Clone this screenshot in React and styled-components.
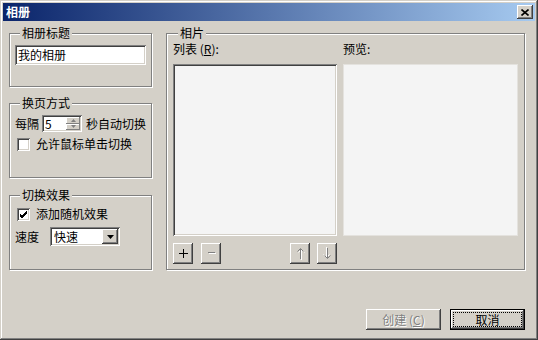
import React from "react";
import styled, { createGlobalStyle } from "styled-components";

const GlobalStyle = createGlobalStyle`
  html, body { margin:0; padding:0; background:#d4d0c8; }
  body {
    font-family: "Noto Sans CJK SC", "Liberation Sans", sans-serif;
    font-size:12px;
    color:#000;
  }
`;

const raised = `box-shadow: inset -1px -1px #404040, inset 1px 1px #ffffff, inset -2px -2px #808080, inset 2px 2px #d4d0c8;`;
const sunken = `box-shadow: inset 1px 1px #808080, inset -1px -1px #ffffff, inset 2px 2px #404040, inset -2px -2px #d4d0c8;`;

const Window = styled.div`
  width:538px;
  height:340px;
  box-sizing:border-box;
  padding:3px;
  background:#d4d0c8;
  display:flex;
  flex-direction:column;
  box-shadow: inset -1px -1px #404040, inset 1px 1px #d4d0c8, inset -2px -2px #808080, inset 2px 2px #ffffff;
`;

const TitleBar = styled.div`
  height:18px;
  display:flex;
  align-items:center;
  justify-content:space-between;
  padding:0 2px 0 3px;
  background:linear-gradient(to right, #0a246a, #a6caf0);
`;

const TitleText = styled.span`
  color:#fff;
  font-weight:bold;
  font-size:12px;
  line-height:14px;
`;

const CloseButton = styled.div`
  width:16px;
  height:14px;
  display:flex;
  align-items:center;
  justify-content:center;
  background:#d4d0c8;
  ${raised}
`;

const Body = styled.div`
  flex:1;
  display:flex;
  flex-direction:column;
  padding:5px 10px 7px 6px;
`;

const MainRow = styled.div`
  display:flex;
  gap:14px;
`;

const LeftColumn = styled.div`
  width:143px;
  display:flex;
  flex-direction:column;
`;

const Group = styled.fieldset`
  margin:${p => p.$mt || 0}px 0 0 0;
  padding:${p => p.$pad || "5px 5px"};
  border:1px solid #808080;
  box-shadow: inset 1px 1px #ffffff, 1px 1px #ffffff;
  height:${p => p.$h}px;
  width:${p => p.$w}px;
  box-sizing:border-box;
  min-width:0;
`;

const Legend = styled.legend`
  padding:0 2px;
  margin-left:5px;
  line-height:14px;
  font-size:12px;
  background:#d4d0c8;
`;

const TextField = styled.div`
  height:20px;
  box-sizing:border-box;
  padding:2px 3px;
  line-height:16px;
  background:#fff;
  ${sunken}
`;

const Row = styled.div`
  display:flex;
  align-items:center;
  margin-top:${p => p.$mt || 0}px;
  padding-left:${p => p.$pl || 0}px;
  line-height:14px;
`;

const Spin = styled.div`
  width:40px;
  height:17px;
  box-sizing:border-box;
  padding:2px;
  margin:0 4px 0 3px;
  display:flex;
  background:#fff;
  ${sunken}
`;

const SpinValue = styled.span`
  flex:1;
  padding-left:1px;
  line-height:13px;
`;

const SpinButtons = styled.div`
  width:14px;
  display:flex;
  flex-direction:column;
`;

const SpinHalf = styled.div`
  flex:1;
  display:flex;
  align-items:center;
  justify-content:center;
  background:#d4d0c8;
  box-shadow: inset -1px -1px #808080, inset 1px 1px #ffffff;
`;

const Check = styled.div`
  width:13px;
  height:13px;
  box-sizing:border-box;
  display:flex;
  align-items:center;
  justify-content:center;
  background:#fff;
  ${sunken}
`;

const CheckLabel = styled.span`
  margin-left:6px;
`;

const Select = styled.div`
  width:70px;
  height:19px;
  box-sizing:border-box;
  padding:2px;
  margin-left:11px;
  display:flex;
  background:#fff;
  ${sunken}
`;

const SelectValue = styled.span`
  flex:1;
  padding-left:2px;
  line-height:15px;
`;

const DropButton = styled.div`
  width:16px;
  display:flex;
  align-items:center;
  justify-content:center;
  background:#d4d0c8;
  ${raised}
`;

const PhotoColumns = styled.div`
  display:flex;
  gap:6px;
`;

const Column = styled.div`
  width:${p => p.$w}px;
  display:flex;
  flex-direction:column;
`;

const Caption = styled.div`
  line-height:14px;
  margin-top:2px;
`;

const ListBox = styled.div`
  margin-top:8px;
  height:172px;
  background:#f4f4f4;
  ${sunken}
`;

const PreviewBox = styled.div`
  margin-top:8px;
  height:172px;
  box-sizing:border-box;
  background:#f4f4f4;
  border:1px solid #e4e2de;
`;

const ToolRow = styled.div`
  margin-top:7px;
  display:flex;
  justify-content:space-between;
`;

const ToolGroup = styled.div`
  display:flex;
  gap:${p => p.$gap}px;
`;

const ToolButton = styled.div`
  width:20px;
  height:21px;
  display:flex;
  align-items:center;
  justify-content:center;
  background:#d4d0c8;
  ${raised}
`;

const Footer = styled.div`
  margin-top:auto;
  display:flex;
  justify-content:flex-end;
  gap:9px;
`;

const Button = styled.div`
  position:relative;
  width:75px;
  height:21px;
  display:flex;
  align-items:center;
  justify-content:center;
  line-height:14px;
  background:#d4d0c8;
  color:${p => (p.$disabled ? "#808080" : "#000")};
  text-shadow:${p => (p.$disabled ? "1px 1px #ffffff" : "none")};
  ${p =>
    p.$default
      ? "box-shadow: inset 0 0 0 1px #000, inset -2px -2px #404040, inset 2px 2px #ffffff, inset -3px -3px #808080, inset 3px 3px #d4d0c8;"
      : raised}

  &::after {
    content:"";
    display:${p => (p.$default ? "block" : "none")};
    position:absolute;
    inset:4px;
    outline:1px dotted #000;
  }
`;

const Tri = ({ down, color = "#000", w = 7 }) => (
  <svg width={w} height={Math.ceil(w / 2)} viewBox={`0 0 ${w} ${Math.ceil(w / 2)}`}>
    <path
      d={down ? `M0 0H${w}L${w / 2} ${Math.ceil(w / 2)}Z` : `M0 ${Math.ceil(w / 2)}H${w}L${w / 2} 0Z`}
      fill={color}
    />
  </svg>
);

const Arrow = ({ down }) => (
  <svg width="9" height="13" viewBox="0 0 9 13">
    <g transform={down ? "rotate(180 4.5 6.5)" : undefined}>
      <path d="M5.5 3v10M2.5 5.5L5.5 2.5L8.5 5.5" stroke="#fff" fill="none" />
      <path d="M4.5 2v10M1.5 4.5L4.5 1.5L7.5 4.5" stroke="#808080" fill="none" />
    </g>
  </svg>
);

export default function App() {
  return (
    <>
      <GlobalStyle />
      <Window>
        <TitleBar>
          <TitleText>相册</TitleText>
          <CloseButton>
            <svg width="8" height="7" viewBox="0 0 8 7">
              <path d="M0.5 0.5L7.5 6.5M7.5 0.5L0.5 6.5" stroke="#000" strokeWidth="1.6" />
            </svg>
          </CloseButton>
        </TitleBar>
        <Body>
          <MainRow>
            <LeftColumn>
              <Group $h={61}>
                <Legend>相册标题</Legend>
                <TextField>我的相册</TextField>
              </Group>
              <Group $h={82} $mt={9}>
                <Legend>换页方式</Legend>
                <Row>
                  每隔
                  <Spin>
                    <SpinValue>5</SpinValue>
                    <SpinButtons>
                      <SpinHalf><Tri w={5} color="#808080" /></SpinHalf>
                      <SpinHalf><Tri w={5} down color="#808080" /></SpinHalf>
                    </SpinButtons>
                  </Spin>
                  秒自动切换
                </Row>
                <Row $mt={5} $pl={2}>
                  <Check />
                  <CheckLabel>允许鼠标单击切换</CheckLabel>
                </Row>
              </Group>
              <Group $h={82} $mt={10}>
                <Legend>切换效果</Legend>
                <Row $pl={2}>
                  <Check>
                    <svg width="9" height="9" viewBox="0 0 9 9">
                      <path d="M1 4l2 2 5-5M1 5l2 2 5-5M1 6l2 2 5-5" stroke="#000" fill="none" />
                    </svg>
                  </Check>
                  <CheckLabel>添加随机效果</CheckLabel>
                </Row>
                <Row $mt={6}>
                  速度
                  <Select>
                    <SelectValue>快速</SelectValue>
                    <DropButton><Tri down /></DropButton>
                  </Select>
                </Row>
              </Group>
            </LeftColumn>
            <Group $h={244} $w={359} $pad="0 6px">
              <Legend>相片</Legend>
              <PhotoColumns>
                <Column $w={165}>
                  <Caption>列表 (<u>R</u>):</Caption>
                  <ListBox />
                  <ToolRow>
                    <ToolGroup $gap={8}>
                      <ToolButton>
                        <svg width="9" height="9" viewBox="0 0 9 9">
                          <path d="M4.5 0v9M0 4.5h9" stroke="#000" />
                        </svg>
                      </ToolButton>
                      <ToolButton>
                        <svg width="9" height="3" viewBox="0 0 9 3">
                          <path d="M1 0.5h7" stroke="#808080" />
                          <path d="M2 1.5h7" stroke="#fff" />
                        </svg>
                      </ToolButton>
                    </ToolGroup>
                    <ToolGroup $gap={7}>
                      <ToolButton><Arrow /></ToolButton>
                      <ToolButton><Arrow down /></ToolButton>
                    </ToolGroup>
                  </ToolRow>
                </Column>
                <Column $w={176}>
                  <Caption>预览:</Caption>
                  <PreviewBox />
                </Column>
              </PhotoColumns>
            </Group>
          </MainRow>
          <Footer>
            <Button $disabled>创建 (<u>C</u>)</Button>
            <Button $default>取消</Button>
          </Footer>
        </Body>
      </Window>
    </>
  );
}
